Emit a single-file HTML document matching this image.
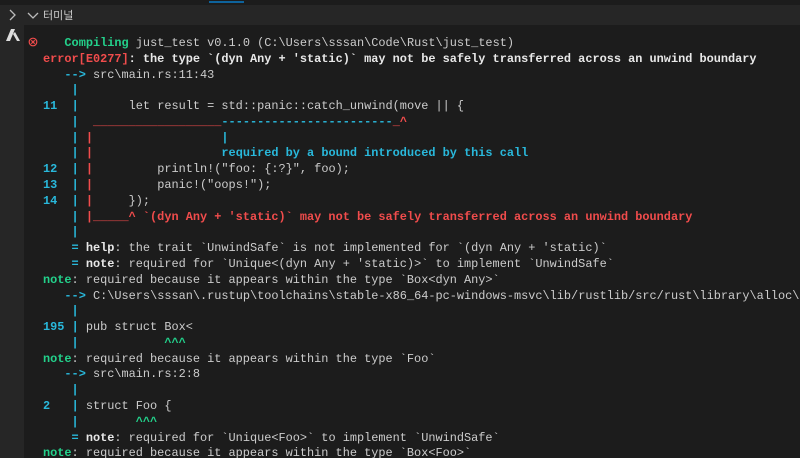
<!DOCTYPE html>
<html><head><meta charset="utf-8"><style>
html,body{margin:0;padding:0;width:800px;height:458px;overflow:hidden;background:#1c1c1c;}
.top{position:absolute;left:0;top:0;width:800px;height:5px;background:#1c1c1c;}
.hdr{position:absolute;left:0;top:5px;width:800px;height:20px;background:#262626;}
.side{position:absolute;left:0;top:25px;width:24px;height:433px;background:#262626;}
.blue{position:absolute;left:209px;top:1px;width:35px;height:2px;background:#0e639c;}
.t{position:absolute;font-family:"Liberation Sans","Noto Sans CJK KR",sans-serif;font-size:12px;color:#ccc;}
.wrap{position:absolute;left:24px;top:25px;width:776px;height:433px;overflow:hidden;}
pre{position:absolute;left:19px;top:11px;margin:0;font-family:"Liberation Mono",monospace;font-size:11.9px;line-height:15.78px;color:#cccccc;white-space:pre;}
.c{color:#29b8db}.r{color:#f14c4c}.g{color:#23d18b}.b{font-weight:bold}.w{color:#e8e8e8;font-weight:bold}
</style></head><body>
<div class="top"></div><div class="hdr"></div><div class="side"></div><div class="blue"></div>
<svg style="position:absolute;left:8px;top:9px" width="10" height="12"><path d="M2 1 L7 6 L2 11" stroke="#bbb" stroke-width="1.3" fill="none"/></svg>
<svg style="position:absolute;left:27px;top:11px" width="12" height="10"><path d="M1 2 L6 7 L11 2" stroke="#bbb" stroke-width="1.3" fill="none"/></svg>
<div class="t" style="left:43px;top:7px;font-size:11px;color:#ccc">터미널</div>
<svg style="position:absolute;left:5px;top:28px" width="16" height="14"><path d="M1 13 L6 1 L10 1 L5 13 Z M8 6 L12 13 L15 13 L10 4 Z" fill="#ddd"/></svg>
<svg style="position:absolute;left:28px;top:37px" width="10" height="10"><circle cx="5" cy="5" r="3.8" stroke="#f14c4c" stroke-width="1.2" fill="none"/><path d="M3.3 3.3L6.7 6.7M6.7 3.3L3.3 6.7" stroke="#f14c4c" stroke-width="1.1"/></svg>
<div class="wrap"><pre>   <span class="g b">Compiling</span> just_test v0.1.0 (C:\Users\sssan\Code\Rust\just_test)
<span class="r b">error[E0277]</span><span class="w">: the type `(dyn Any + 'static)` may not be safely transferred across an unwind boundary</span>
   <span class="c b">--&gt;</span> src\main.rs:11:43
    <span class="c b">|</span>
<span class="c b">11</span>  <span class="c b">|</span>       let result = std::panic::catch_unwind(move || {
    <span class="c b">|</span>  <span class="r b">__________________</span><span class="c b">------------------------</span><span class="r b">_^</span>
    <span class="c b">|</span> <span class="r b">|</span>                  <span class="c b">|</span>
    <span class="c b">|</span> <span class="r b">|</span>                  <span class="c b">required by a bound introduced by this call</span>
<span class="c b">12</span>  <span class="c b">|</span> <span class="r b">|</span>         println!("foo: {:?}", foo);
<span class="c b">13</span>  <span class="c b">|</span> <span class="r b">|</span>         panic!("oops!");
<span class="c b">14</span>  <span class="c b">|</span> <span class="r b">|</span>     });
    <span class="c b">|</span> <span class="r b">|_____^ `(dyn Any + 'static)` may not be safely transferred across an unwind boundary</span>
    <span class="c b">|</span>
    <span class="c b">=</span> <span class="w">help</span>: the trait `UnwindSafe` is not implemented for `(dyn Any + 'static)`
    <span class="c b">=</span> <span class="w">note</span>: required for `Unique&lt;(dyn Any + 'static)&gt;` to implement `UnwindSafe`
<span class="g b">note</span>: required because it appears within the type `Box&lt;dyn Any&gt;`
   <span class="c b">--&gt;</span> C:\Users\sssan\.rustup\toolchains\stable-x86_64-pc-windows-msvc\lib/rustlib/src/rust\library\alloc\src\boxed.rs
    <span class="c b">|</span>
<span class="c b">195</span> <span class="c b">|</span> pub struct Box&lt;
    <span class="c b">|</span>            <span class="g b">^^^</span>
<span class="g b">note</span>: required because it appears within the type `Foo`
   <span class="c b">--&gt;</span> src\main.rs:2:8
    <span class="c b">|</span>
<span class="c b">2</span>   <span class="c b">|</span> struct Foo {
    <span class="c b">|</span>        <span class="g b">^^^</span>
    <span class="c b">=</span> <span class="w">note</span>: required for `Unique&lt;Foo&gt;` to implement `UnwindSafe`
<span class="g b">note</span>: required because it appears within the type `Box&lt;Foo&gt;`
</pre></div>
</body></html>
